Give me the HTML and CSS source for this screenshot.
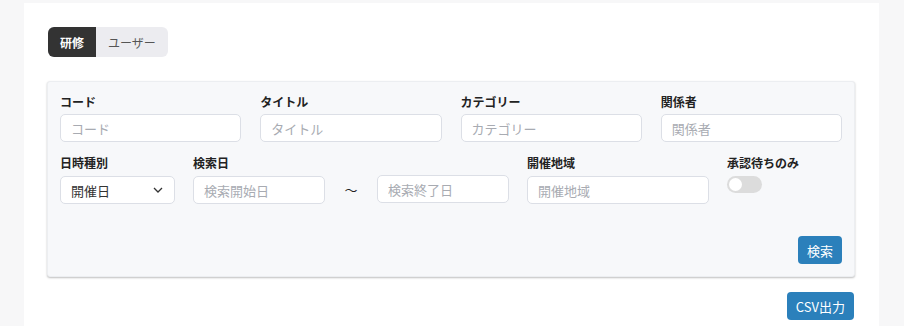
FILE: index.html
```html
<!DOCTYPE html>
<html lang="ja">
<head>
    <meta charset="UTF-8">
    <meta name="viewport" content="width=device-width, initial-scale=1.0">
    <title>研修検索</title>
    <link rel="stylesheet" href="styles.css">
</head>
<body>
    <div class="panel">
        <div class="tabs">
            <button class="tab active">研修</button>
            <button class="tab">ユーザー</button>
        </div>

        <div class="card">
            <div class="row row-top">
                <div class="field">
                    <label>コード</label>
                    <input type="text" placeholder="コード">
                </div>
                <div class="field">
                    <label>タイトル</label>
                    <input type="text" placeholder="タイトル">
                </div>
                <div class="field">
                    <label>カテゴリー</label>
                    <input type="text" placeholder="カテゴリー">
                </div>
                <div class="field">
                    <label>関係者</label>
                    <input type="text" placeholder="関係者">
                </div>
            </div>

            <div class="row row-bottom">
                <div class="field f-kind">
                    <label>日時種別</label>
                    <div class="select">
                        <span>開催日</span>
                        <svg width="10" height="6" viewBox="0 0 10 6"><path d="M1 1l4 4 4-4" fill="none" stroke="#333" stroke-width="1.3"/></svg>
                    </div>
                </div>
                <div class="field f-date">
                    <label>検索日</label>
                    <input type="text" placeholder="検索開始日">
                </div>
                <div class="tilde">～</div>
                <div class="field f-date f-end">
                    <input type="text" placeholder="検索終了日">
                </div>
                <div class="field f-area">
                    <label>開催地域</label>
                    <input type="text" placeholder="開催地域">
                </div>
                <div class="field f-switch">
                    <label>承認待ちのみ</label>
                    <span class="switch"><span class="knob"></span></span>
                </div>
            </div>

            <div class="actions">
                <button class="button">検索</button>
            </div>
        </div>

        <div class="export">
            <button class="button">CSV出力</button>
        </div>
    </div>
</body>
</html>
```

FILE: styles.css
```css
body {
    margin: 0;
    font-family: "Noto Sans CJK JP", "Noto Sans", sans-serif;
    background-color: #f7f7f8; /* light gray page */
    color: #222;
}
.panel {
    width: 808px;
    margin: 3px 0 0 24px;
    padding: 24px 24px 6px 23px;
    background-color: #fff;
    min-height: 300px;
}
.tabs {
    display: inline-flex;
    margin-left: 1px;
    border-radius: 6px;
    overflow: hidden;
    background-color: #ececf0;
}
.tab {
    height: 30px;
    padding: 0 12px;
    border: none;
    background: none;
    font-family: inherit;
    font-size: 12px;
    color: #555;
    cursor: pointer;
}
.tab.active {
    width: 48px;
    background-color: #333;
    color: #fff;
    font-weight: bold;
}
.card {
    margin-top: 24px;
    padding: 11px 12px 12px 12px;
    border: 1px solid #eceef1;
    border-radius: 3px;
    background-color: #f7f8fa;
    box-shadow: 0 1px 2px rgba(0, 0, 0, 0.25);
}
.row {
    display: flex;
    gap: 19px;
}
.row-bottom {
    margin-top: 12px;
    gap: 0;
}
.field {
    display: flex;
    flex-direction: column;
    width: 182px;
}
.field label {
    height: 18px;
    margin-bottom: 3px;
    font-size: 12px;
    font-weight: bold;
    line-height: 18px;
    color: #222;
}
.row-bottom .field label {
    margin-bottom: 4px;
}
.field input {
    box-sizing: border-box;
    height: 28px;
    padding: 0 10px;
    border: 1px solid #dcdfe6;
    border-radius: 5px;
    background-color: #fff;
    font-family: inherit;
    font-size: 13px;
    color: #333;
}
.field input::placeholder {
    color: #a8abb2;
}
.f-kind {
    width: 115px;
    margin-right: 18px;
}
.select {
    box-sizing: border-box;
    height: 28px;
    display: flex;
    align-items: center;
    justify-content: space-between;
    padding: 0 11px 0 10px;
    border: 1px solid #dcdfe6;
    border-radius: 5px;
    background-color: #fff;
    font-size: 13px;
    color: #333;
}
.f-date {
    width: 132px;
}
.f-end {
    justify-content: flex-end;
}
.f-end input {
    height: 28px;
    margin-bottom: 1px;
}
.tilde {
    width: 52px;
    padding-top: 22px;
    text-align: center;
    font-size: 13px;
    line-height: 28px;
}
.f-area {
    margin-left: 18px;
}
.f-switch {
    margin-left: 18px;
    width: auto;
}
.switch {
    position: relative;
    display: block;
    width: 35px;
    height: 17px;
    border-radius: 9px;
    background-color: #dcdcdc;
}
.switch .knob {
    position: absolute;
    top: 2px;
    left: 2px;
    width: 13px;
    height: 13px;
    border-radius: 50%;
    background-color: #fff;
}
.actions {
    display: flex;
    justify-content: flex-end;
    margin-top: 32px;
}
.button {
    height: 28px;
    padding: 0 9px;
    border: none;
    border-radius: 4px;
    background-color: #2b80bb;
    color: #fff;
    font-family: inherit;
    font-size: 13px;
    cursor: pointer;
}
.export {
    display: flex;
    justify-content: flex-end;
    margin-top: 15px;
    margin-right: 1px;
}
```
